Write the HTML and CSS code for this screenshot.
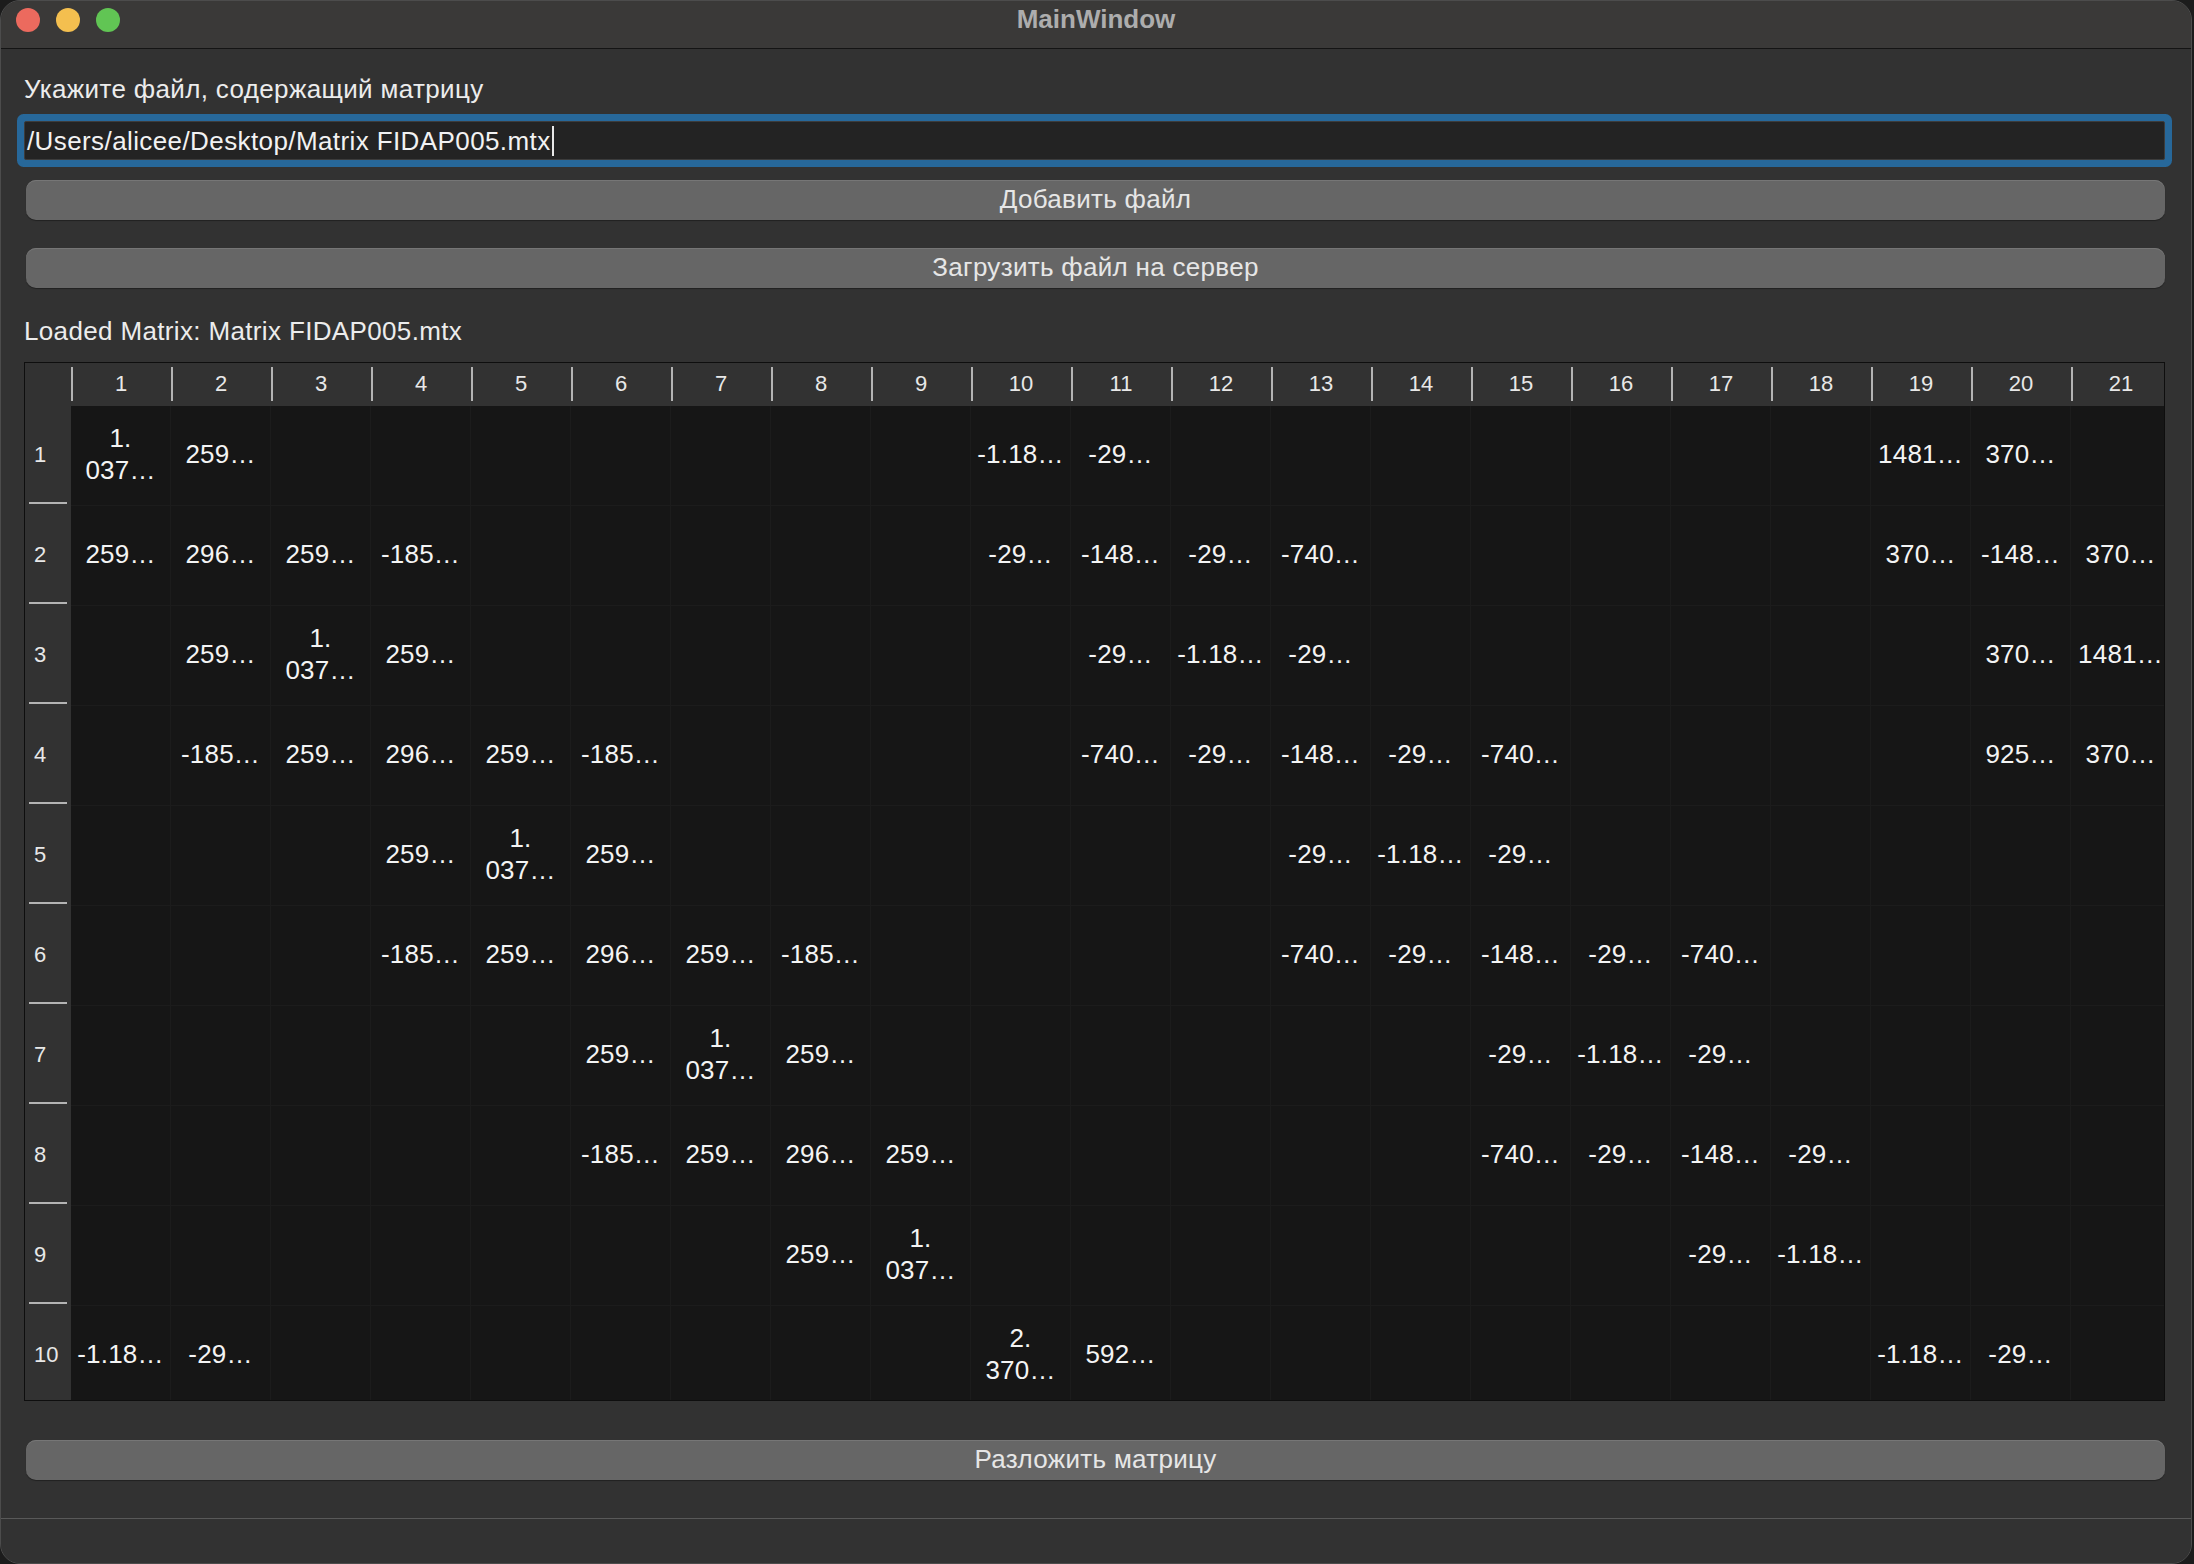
FILE: index.html
```html
<!DOCTYPE html>
<html lang="ru">
<head>
<meta charset="utf-8">
<title>MainWindow</title>
<link rel="stylesheet" href="styles.css">
</head>
<body>
<div class="window">
  <div class="titlebar">
    <div class="lights">
      <span class="light red"></span>
      <span class="light yellow"></span>
      <span class="light green"></span>
    </div>
    <div class="title">MainWindow</div>
    <div></div>
  </div>
  <div class="content">
    <div class="label first">Укажите файл, содержащий матрицу</div>
    <div class="field"><span class="field-text">/Users/alicee/Desktop/Matrix FIDAP005.mtx</span><span class="caret"></span></div>
    <div class="btn btn-add">Добавить файл</div>
    <div class="btn btn-upload">Загрузить файл на сервер</div>
    <div class="label loaded">Loaded Matrix: Matrix FIDAP005.mtx</div>
    <div class="table">
      <div class="grid">
        <div class="corner"></div>
        <div class="hh">1</div><div class="hh">2</div><div class="hh">3</div><div class="hh">4</div><div class="hh">5</div><div class="hh">6</div><div class="hh">7</div><div class="hh">8</div><div class="hh">9</div><div class="hh">10</div><div class="hh">11</div><div class="hh">12</div><div class="hh">13</div><div class="hh">14</div><div class="hh">15</div><div class="hh">16</div><div class="hh">17</div><div class="hh">18</div><div class="hh">19</div><div class="hh">20</div><div class="hh">21</div>

        <div class="vh">1</div>
        <div class="c">1.<br>037…</div><div class="c">259…</div><div class="c"></div><div class="c"></div><div class="c"></div><div class="c"></div><div class="c"></div><div class="c"></div><div class="c"></div><div class="c">-1.18…</div><div class="c">-29…</div><div class="c"></div><div class="c"></div><div class="c"></div><div class="c"></div><div class="c"></div><div class="c"></div><div class="c"></div><div class="c">1481…</div><div class="c">370…</div><div class="c"></div>

        <div class="vh">2</div>
        <div class="c">259…</div><div class="c">296…</div><div class="c">259…</div><div class="c">-185…</div><div class="c"></div><div class="c"></div><div class="c"></div><div class="c"></div><div class="c"></div><div class="c">-29…</div><div class="c">-148…</div><div class="c">-29…</div><div class="c">-740…</div><div class="c"></div><div class="c"></div><div class="c"></div><div class="c"></div><div class="c"></div><div class="c">370…</div><div class="c">-148…</div><div class="c">370…</div>

        <div class="vh">3</div>
        <div class="c"></div><div class="c">259…</div><div class="c">1.<br>037…</div><div class="c">259…</div><div class="c"></div><div class="c"></div><div class="c"></div><div class="c"></div><div class="c"></div><div class="c"></div><div class="c">-29…</div><div class="c">-1.18…</div><div class="c">-29…</div><div class="c"></div><div class="c"></div><div class="c"></div><div class="c"></div><div class="c"></div><div class="c"></div><div class="c">370…</div><div class="c">1481…</div>

        <div class="vh">4</div>
        <div class="c"></div><div class="c">-185…</div><div class="c">259…</div><div class="c">296…</div><div class="c">259…</div><div class="c">-185…</div><div class="c"></div><div class="c"></div><div class="c"></div><div class="c"></div><div class="c">-740…</div><div class="c">-29…</div><div class="c">-148…</div><div class="c">-29…</div><div class="c">-740…</div><div class="c"></div><div class="c"></div><div class="c"></div><div class="c"></div><div class="c">925…</div><div class="c">370…</div>

        <div class="vh">5</div>
        <div class="c"></div><div class="c"></div><div class="c"></div><div class="c">259…</div><div class="c">1.<br>037…</div><div class="c">259…</div><div class="c"></div><div class="c"></div><div class="c"></div><div class="c"></div><div class="c"></div><div class="c"></div><div class="c">-29…</div><div class="c">-1.18…</div><div class="c">-29…</div><div class="c"></div><div class="c"></div><div class="c"></div><div class="c"></div><div class="c"></div><div class="c"></div>

        <div class="vh">6</div>
        <div class="c"></div><div class="c"></div><div class="c"></div><div class="c">-185…</div><div class="c">259…</div><div class="c">296…</div><div class="c">259…</div><div class="c">-185…</div><div class="c"></div><div class="c"></div><div class="c"></div><div class="c"></div><div class="c">-740…</div><div class="c">-29…</div><div class="c">-148…</div><div class="c">-29…</div><div class="c">-740…</div><div class="c"></div><div class="c"></div><div class="c"></div><div class="c"></div>

        <div class="vh">7</div>
        <div class="c"></div><div class="c"></div><div class="c"></div><div class="c"></div><div class="c"></div><div class="c">259…</div><div class="c">1.<br>037…</div><div class="c">259…</div><div class="c"></div><div class="c"></div><div class="c"></div><div class="c"></div><div class="c"></div><div class="c"></div><div class="c">-29…</div><div class="c">-1.18…</div><div class="c">-29…</div><div class="c"></div><div class="c"></div><div class="c"></div><div class="c"></div>

        <div class="vh">8</div>
        <div class="c"></div><div class="c"></div><div class="c"></div><div class="c"></div><div class="c"></div><div class="c">-185…</div><div class="c">259…</div><div class="c">296…</div><div class="c">259…</div><div class="c"></div><div class="c"></div><div class="c"></div><div class="c"></div><div class="c"></div><div class="c">-740…</div><div class="c">-29…</div><div class="c">-148…</div><div class="c">-29…</div><div class="c"></div><div class="c"></div><div class="c"></div>

        <div class="vh">9</div>
        <div class="c"></div><div class="c"></div><div class="c"></div><div class="c"></div><div class="c"></div><div class="c"></div><div class="c"></div><div class="c">259…</div><div class="c">1.<br>037…</div><div class="c"></div><div class="c"></div><div class="c"></div><div class="c"></div><div class="c"></div><div class="c"></div><div class="c"></div><div class="c">-29…</div><div class="c">-1.18…</div><div class="c"></div><div class="c"></div><div class="c"></div>

        <div class="vh last">10</div>
        <div class="c">-1.18…</div><div class="c">-29…</div><div class="c"></div><div class="c"></div><div class="c"></div><div class="c"></div><div class="c"></div><div class="c"></div><div class="c"></div><div class="c">2.<br>370…</div><div class="c">592…</div><div class="c"></div><div class="c"></div><div class="c"></div><div class="c"></div><div class="c"></div><div class="c"></div><div class="c"></div><div class="c">-1.18…</div><div class="c">-29…</div><div class="c"></div>
      </div>
    </div>
    <div class="btn btn-decompose">Разложить матрицу</div>
  </div>
  <div class="statusbar"></div>
</div>
</body>
</html>
```

FILE: styles.css
```css
* { box-sizing: border-box; }

html, body {
  margin: 0;
  padding: 0;
  background: #1c1c1c;
}

body {
  width: 2194px;
  height: 1564px;
  overflow: hidden;
  font-family: "Liberation Sans", Arial, sans-serif;
  font-size: 26px;
  color: #ececec;
}

.window {
  width: 2192px;
  height: 1564px;
  border: 1px solid #4c4c4c;
  border-radius: 20px;
  background: #323232;
  overflow: hidden;
  display: flex;
  flex-direction: column;
}

.titlebar {
  height: 48px;
  flex: none;
  background: #3a3938;
  border-bottom: 1px solid #141414;
  display: grid;
  grid-template-columns: 1fr auto 1fr;
  align-items: start;
}

.lights {
  display: flex;
  gap: 16px;
  padding-left: 15px;
  padding-top: 7px;
}

.light {
  width: 24px;
  height: 24px;
  border-radius: 50%;
  display: block;
}
.red { background: #ec6a5e; }
.yellow { background: #f4bf4f; }
.green { background: #61c554; }

.title {
  font-weight: bold;
  font-size: 26px;
  line-height: 32px;
  padding-top: 2px;
  color: #adadad;
}

.content {
  flex: 1;
  display: flex;
  flex-direction: column;
  padding: 0 26px 0 23px;
}

.label {
  font-size: 26px;
  line-height: 32px;
  color: #ececec;
  letter-spacing: 0.35px;
}
.label.first { margin-top: 24px; }
.label.loaded { margin-top: 27px; }

.field {
  margin-top: 16px;
  height: 39px;
  background: #232323;
  border: 1px solid #3c3c3c;
  border-radius: 2px;
  box-shadow: 0 0 0 7px #27689a;
  display: flex;
  align-items: center;
  padding-left: 2px;
  padding-top: 2px;
  color: #f2f2f2;
  letter-spacing: 0.4px;
}

.caret {
  display: block;
  width: 2px;
  height: 30px;
  background: #e8e8e8;
  margin-left: 1px;
  margin-top: -2px;
}

.btn {
  height: 40px;
  margin-left: 2px;
  border-radius: 10px;
  background: #666666;
  box-shadow: inset 0 1px 0 #767676, 0 1px 1px rgba(0,0,0,0.35);
  color: #e6e6e6;
  text-align: center;
  line-height: 38px;
  font-size: 26px;
  letter-spacing: 0.3px;
}
.btn-add { margin-top: 20px; }
.btn-upload { margin-top: 28px; }
.btn-decompose { margin-top: 39px; }

.table {
  margin-top: 15px;
  height: 1039px;
  border: 1px solid #0e0e0e;
  background: #161616;
  overflow: hidden;
}

.grid {
  display: grid;
  grid-template-columns: 46px repeat(21, 100px);
  grid-template-rows: 43px repeat(10, 100px);
  width: 2146px;
}

.corner { background: #323232; }

.hh {
  background: #323232 linear-gradient(#b4b4b4, #b4b4b4) no-repeat 0 4px / 2px 34px;
  font-size: 22px;
  color: #e8e8e8;
  display: flex;
  align-items: center;
  justify-content: center;
  padding-bottom: 1px;
}

.vh {
  background: #323232 linear-gradient(#b4b4b4, #b4b4b4) no-repeat 4px calc(100% - 2px) / 38px 2px;
  font-size: 22px;
  color: #e8e8e8;
  display: flex;
  align-items: center;
  padding-left: 9px;
  padding-bottom: 2px;
}
.vh.last { background: #323232; }

.c {
  border-right: 1px solid #1c1c1c;
  border-bottom: 1px solid #1c1c1c;
  display: flex;
  align-items: center;
  justify-content: center;
  text-align: center;
  font-size: 26px;
  line-height: 32px;
  color: #f4f4f4;
  letter-spacing: 0.2px;
  padding-bottom: 3px;
}

.statusbar {
  height: 45px;
  flex: none;
  border-top: 1px solid #595959;
  background: #323232;
}
```
